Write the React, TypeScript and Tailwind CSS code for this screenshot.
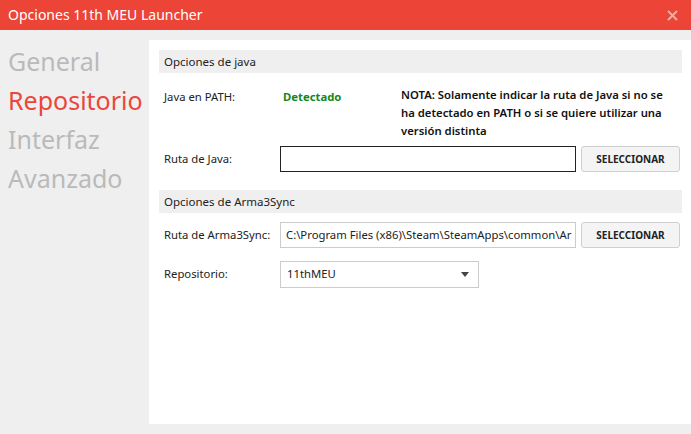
import React from "react";

const font = { fontFamily: '"Noto Sans", "Open Sans", sans-serif' };

function Header({ children }: { children: React.ReactNode }) {
  return (
    <div className="h-[23px] bg-[#efefef] pl-[5px] flex items-center text-[11.5px] text-[#222]">
      {children}
    </div>
  );
}

function Button() {
  return (
    <button className="w-[99px] h-[26px] ml-[5px] rounded-[3px] border border-[#cfcfcf] bg-[#f4f4f4] text-[10px] font-bold text-[#222] flex items-center justify-center">
      SELECCIONAR
    </button>
  );
}

export default function App() {
  return (
    <div className="w-[691px] h-[434px] bg-[#efefef] flex flex-col overflow-hidden" style={font}>
      <div className="h-[30px] bg-[#ec4436] flex items-center justify-between pl-[8px] pr-[12px] shrink-0">
        <span className="text-white text-[14px] leading-none">Opciones 11th MEU Launcher</span>
        <svg width="11" height="11" viewBox="0 0 11 11" className="mr-[1px]">
          <path d="M1 1 L10 10 M10 1 L1 10" stroke="#f6aaa3" strokeWidth="2" />
        </svg>
      </div>
      <div className="flex flex-1 pt-[10px] pb-[10px]">
        <div className="w-[149px] shrink-0 pl-[8px] pt-[2px] flex flex-col text-[25px] leading-[39px]">
          <span className="text-[#bababa]">General</span>
          <span className="text-[#e9473b]">Repositorio</span>
          <span className="text-[#bababa]">Interfaz</span>
          <span className="text-[#bababa]">Avanzado</span>
        </div>
        <div className="flex-1 bg-white pl-[10px] pr-[9px] pt-[10px] text-[11.3px] text-[#222]">
          <Header>Opciones de java</Header>
          <div className="flex items-start mt-[13px] pl-[5px]">
            <div className="w-[116px] leading-[18px] pt-[2px]">Java en PATH:</div>
            <div className="w-[121px] pl-[3px] leading-[18px] pt-[2px] font-bold text-[#17871a]">Detectado</div>
            <div className="w-[272px] leading-[18px] font-semibold text-[#111]">
              NOTA: Solamente indicar la ruta de Java si no se ha detectado en PATH o si se quiere utilizar una versión distinta
            </div>
          </div>
          <div className="flex items-center mt-[6px] pl-[5px]">
            <div className="w-[116px]">Ruta de Java:</div>
            <div className="w-[296px] h-[26px] border border-[#222]" />
            <Button />
          </div>
          <div className="mt-[18px]">
            <Header>Opciones de Arma3Sync</Header>
          </div>
          <div className="flex items-center mt-[9px] pl-[5px]">
            <div className="w-[116px]">Ruta de Arma3Sync:</div>
            <div className="w-[296px] h-[26px] border border-[#cccccc] pl-[5px] flex items-center overflow-hidden whitespace-nowrap">
              C:\Program Files (x86)\Steam\SteamApps\common\Ar
            </div>
            <Button />
          </div>
          <div className="flex items-center mt-[13px] pl-[5px]">
            <div className="w-[116px]">Repositorio:</div>
            <div className="w-[199px] h-[27px] border border-[#cccccc] pl-[6px] pr-[9px] flex items-center justify-between">
              <span>11thMEU</span>
              <svg width="8" height="5" viewBox="0 0 8 5">
                <path d="M0 0 L8 0 L4 5 Z" fill="#444" />
              </svg>
            </div>
          </div>
        </div>
      </div>
    </div>
  );
}
